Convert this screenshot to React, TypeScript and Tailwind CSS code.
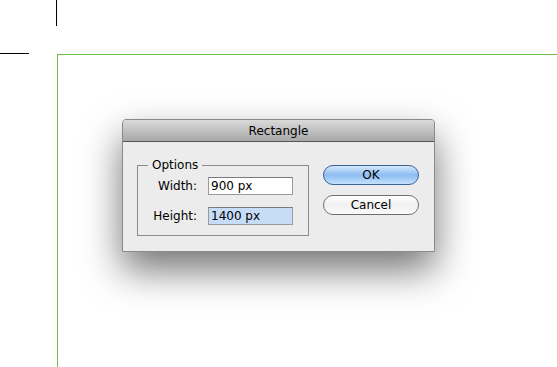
import React from "react";

export default function App() {
  const font = { fontFamily: '"DejaVu Sans", "Liberation Sans", sans-serif' };
  return (
    <div className="relative w-[557px] h-[367px] bg-white overflow-hidden" style={font}>
      {/* crop marks */}
      <div className="absolute left-[56px] top-0 w-px h-[26px] bg-black" />
      <div className="absolute left-0 top-[53px] w-[29px] h-px bg-black" />
      {/* artboard */}
      <div className="absolute left-[57px] top-[54px] right-0 bottom-0 border-l border-t border-[#6cc04a] pl-[64px] pt-[64px]">
        <div className="w-[313px] h-[133px] flex flex-col rounded-t-[4px] border border-[#8a8a8a] bg-[#ececec] shadow-[0_18px_38px_rgba(0,0,0,0.55)]">
          <div className="h-[22px] shrink-0 rounded-t-[3px] border-b border-[#555] bg-gradient-to-b from-[#dadada] to-[#a8a8a8] flex items-center justify-center text-[12px] text-black">
            Rectangle
          </div>
          <div className="flex pl-[14px] pt-[23px]">
            <div className="relative w-[172px] h-[71px] border border-[#8c8c8c] pt-[11px]">
              <span className="absolute left-[10px] -top-[9px] px-[4px] bg-[#ececec] text-[12px] leading-[16px] text-black">
                Options
              </span>
              <div className="grid grid-cols-[59px_85px] gap-x-[11px] gap-y-[12px] items-center">
                <span className="text-right text-[12px] text-black">Width:</span>
                <div className="h-[18px] border border-[#9a9a9a] border-t-[#7a7a7a] bg-white text-[12px] leading-[16px] pl-[2px] text-black">
                  900 px
                </div>
                <span className="text-right text-[12px] text-black">Height:</span>
                <div className="h-[18px] border border-[#9a9a9a] border-t-[#7a7a7a] bg-[#c6dcf7] text-[12px] leading-[16px] pl-[2px] text-black">
                  1400 px
                </div>
              </div>
            </div>
            <div className="ml-[14px] flex flex-col gap-[10px]">
              <div className="w-[96px] h-[20px] rounded-full border border-[#3b5f98] bg-gradient-to-b from-[#d6e8fc] via-[#8dbdf1] to-[#c3e1fd] flex items-center justify-center text-[12px] text-black">
                OK
              </div>
              <div className="w-[96px] h-[20px] rounded-full border border-[#6f6f6f] bg-gradient-to-b from-[#ffffff] via-[#f1f1f1] to-[#fafafa] flex items-center justify-center text-[12px] text-black">
                Cancel
              </div>
            </div>
          </div>
        </div>
      </div>
    </div>
  );
}
